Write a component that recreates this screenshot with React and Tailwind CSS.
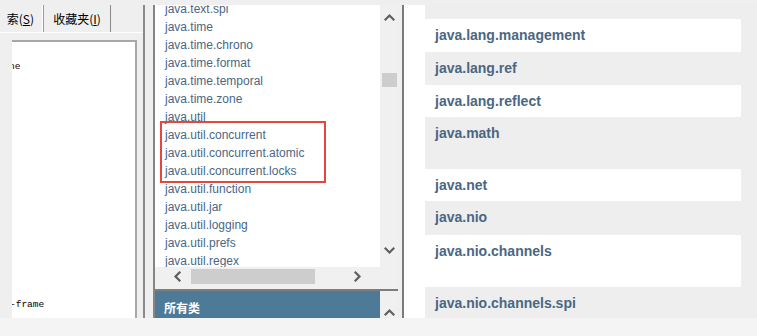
import React from "react";

const Chev = ({ dir }) => {
  const d = {
    up: "M1.5 6.5 L5.5 2.5 L9.5 6.5",
    down: "M1.5 2.5 L5.5 6.5 L9.5 2.5",
    left: "M6.5 1.5 L2.5 5.5 L6.5 9.5",
    right: "M2.5 1.5 L6.5 5.5 L2.5 9.5",
  }[dir];
  const horiz = dir === "up" || dir === "down";
  return (
    <svg width={horiz ? 11 : 9} height={horiz ? 9 : 11} viewBox={horiz ? "0 0 11 9" : "0 0 9 11"}>
      <path d={d} fill="none" stroke="#5f5f5f" strokeWidth="2.2" strokeLinecap="square" />
    </svg>
  );
};

const midItems = [
  "java.text.spi",
  "java.time",
  "java.time.chrono",
  "java.time.format",
  "java.time.temporal",
  "java.time.zone",
  "java.util",
  "java.util.concurrent",
  "java.util.concurrent.atomic",
  "java.util.concurrent.locks",
  "java.util.function",
  "java.util.jar",
  "java.util.logging",
  "java.util.prefs",
  "java.util.regex",
  "java.util.spi",
];

const rows = [
  { t: "java.lang.invoke", h: "h-[39px]", bg: "bg-[#eeeeef]" },
  { t: "java.lang.management", h: "h-[33px]", bg: "bg-white" },
  { t: "java.lang.ref", h: "h-[33px]", bg: "bg-[#eeeeef]" },
  { t: "java.lang.reflect", h: "h-[32px]", bg: "bg-white" },
  { t: "java.math", h: "h-[52px]", bg: "bg-[#eeeeef]" },
  { t: "java.net", h: "h-[32px]", bg: "bg-white" },
  { t: "java.nio", h: "h-[34px]", bg: "bg-[#eeeeef]" },
  { t: "java.nio.channels", h: "h-[52px]", bg: "bg-white" },
  { t: "java.nio.channels.spi", h: "h-[40px]", bg: "bg-[#eeeeef]" },
];

export default function App() {
  return (
    <div className="w-[757px] h-[336px] overflow-hidden bg-[#efefef] flex flex-col font-['Liberation_Sans',Arial,sans-serif]">
      <div className="h-[318px] flex">
        {/* left panel */}
        <div className="w-[153px] h-full flex pt-[5px]">
          <div className="w-[145px] h-full flex flex-col border-r-2 border-r-[#8a8a8a]">
            <div className="h-[27px] flex text-[12px] text-black font-['Noto_Sans_CJK_SC','Liberation_Sans',sans-serif]">
              <div className="w-[44px] h-full flex items-center justify-end pr-[9px] border-r border-r-[#9a9a9a] overflow-hidden whitespace-nowrap shadow-[inset_-1px_0_0_#ffffff]">
                <span>索(<u>S</u>)</span>
              </div>
              <div className="w-[67px] h-full flex items-center justify-center border-r border-r-[#8a8a8a] whitespace-nowrap">
                <span>收藏夹(<u>I</u>)</span>
              </div>
            </div>
            <div className="flex-1 border-t border-t-white pt-[7px] pl-[12px] pr-[6px]">
              <div className="h-full bg-white border-t-2 border-r-2 border-[#a7a7a7] flex flex-col overflow-hidden font-['Liberation_Mono','DejaVu_Sans_Mono',monospace] text-[9.5px] text-black">
                <div className="mt-[19px] h-[12px] leading-[12px] -ml-[3px] whitespace-nowrap">ne</div>
                <div className="flex-1" />
                <div className="h-[12px] leading-[12px] mb-[7px] -ml-[2px] whitespace-nowrap">-frame</div>
              </div>
            </div>
          </div>
        </div>

        {/* middle panel */}
        <div className="w-[245px] h-full pt-[5px]">
          <div className="h-full flex flex-col border-l-2 border-l-[#858585]">
            <div className="h-[262px] flex">
              <div className="relative flex-1 bg-white overflow-hidden">
                <div className="-mt-[5px] pl-[10px] text-[12px] text-[#4a6782]">
                  {midItems.map((t) => (
                    <div key={t} className="h-[18px] leading-[18px] whitespace-nowrap">{t}</div>
                  ))}
                </div>
                <div className="absolute left-[5px] top-[116px] w-[166px] h-[62px] border-2 border-[#e5473c]" />
              </div>
              <div className="w-[18px] h-full bg-[#f0f0f0] flex flex-col items-center">
                <div className="mt-[8px]"><Chev dir="up" /></div>
                <div className="mt-[51px] w-[15px] h-[14px] bg-[#cdcdcd]" />
                <div className="flex-1" />
                <div className="mb-[12px]"><Chev dir="down" /></div>
              </div>
            </div>
            <div className="h-[18px] flex bg-[#f0f0f0]">
              <div className="flex-1 flex items-center">
                <div className="ml-[18px]"><Chev dir="left" /></div>
                <div className="ml-[9px] w-[124px] h-[15px] bg-[#cdcdcd]" />
                <div className="flex-1" />
                <div className="mr-[18px]"><Chev dir="right" /></div>
              </div>
              <div className="w-[18px]" />
            </div>
            <div className="h-[4px] bg-[#f0f0f0]" />
            <div className="h-[2px] bg-[#7d7d7d]" />
            <div className="flex-1 flex overflow-hidden">
              <div className="flex-1 bg-[#4d7a97] pl-[9px] pt-[9px] text-[12px] font-bold text-white font-['Noto_Sans_CJK_SC','Liberation_Sans',sans-serif] leading-[16px]">所有类</div>
              <div className="w-[18px] bg-[#f0f0f0] flex justify-center pt-[17px]"><Chev dir="up" /></div>
            </div>
          </div>
        </div>

        {/* right panel */}
        <div className="flex-1 h-full pt-[5px] pl-[4px]">
          <div className="h-full flex border-l-2 border-l-[#7a7a7a]">
            <div className="w-[21px] h-full bg-white" />
            <div className="w-[316px] h-full overflow-hidden">
              <div className="-mt-[25px]">
                {rows.map((r) => (
                  <div key={r.t} className={`${r.h} ${r.bg} pl-[10px] pt-[8px] text-[14px] leading-[16px] font-bold text-[#4a6782] whitespace-nowrap`}>
                    {r.t}
                  </div>
                ))}
              </div>
            </div>
            <div className="flex-1 bg-[#eeeeee]" />
          </div>
        </div>
      </div>
      <div className="flex-1 bg-[#f4f4f4]" />
    </div>
  );
}
